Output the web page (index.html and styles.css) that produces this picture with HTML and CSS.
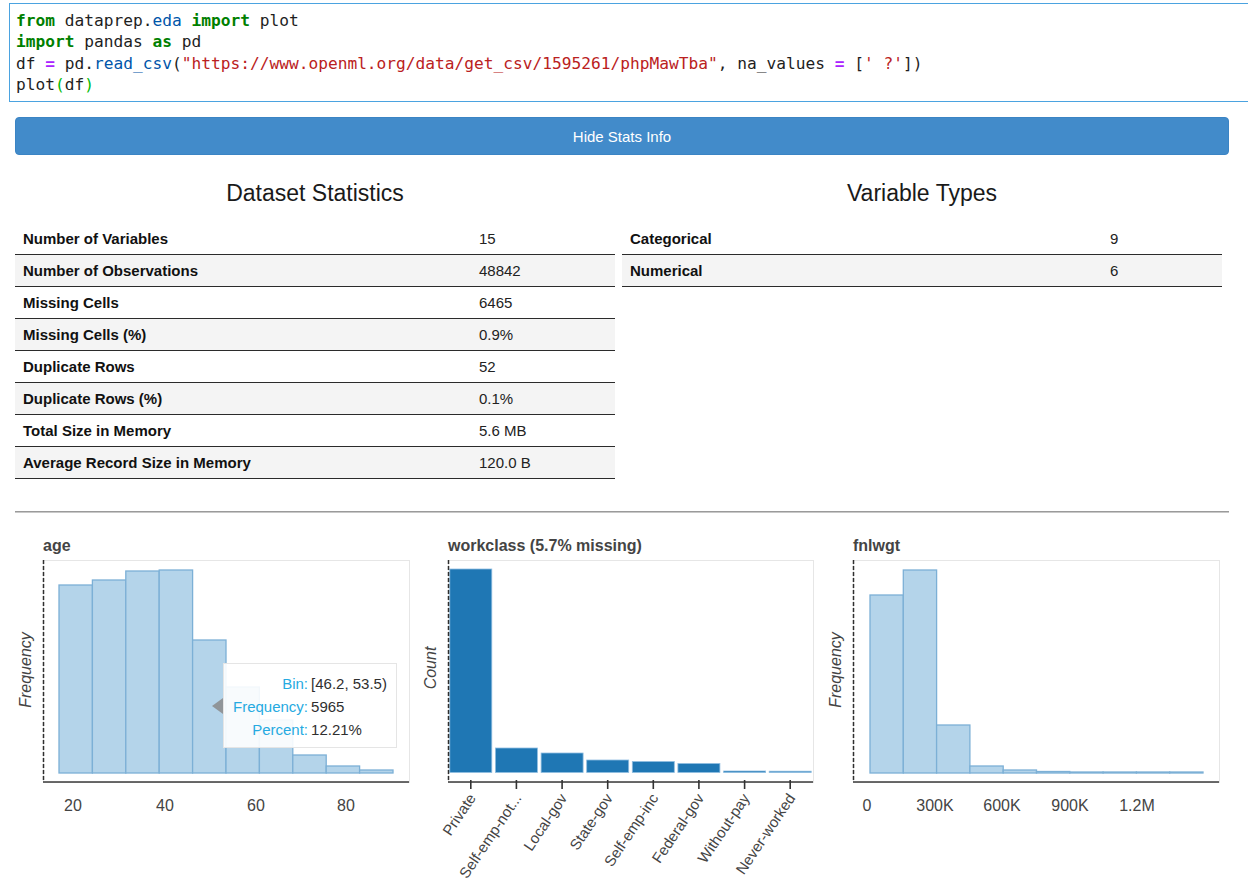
FILE: index.html
```html
<!DOCTYPE html>
<html>
<head>
<meta charset="utf-8">
<link rel="stylesheet" href="styles.css">
</head>
<body>
<div class="cell">
<pre class="code"><span class="kw">from</span> dataprep.<span class="prop">eda</span> <span class="kw">import</span> plot
<span class="kw">import</span> pandas <span class="kw">as</span> pd
df <span class="op">=</span> pd.<span class="prop">read_csv</span>(<span class="str">"https://www.openml.org/data/get_csv/1595261/phpMawTba"</span>, na_values <span class="op">=</span> [<span class="str">' ?'</span>])
plot<span class="mb">(</span>df<span class="mb">)</span></pre>
</div>

<div class="output">
  <button class="toggle">Hide Stats Info</button>

  <div class="stats">
    <section class="stat-col">
      <h3 class="stat-title">Dataset Statistics</h3>
      <table class="stat-table left">
        <tr><td class="k">Number of Variables</td><td class="v">15</td></tr>
        <tr><td class="k">Number of Observations</td><td class="v">48842</td></tr>
        <tr><td class="k">Missing Cells</td><td class="v">6465</td></tr>
        <tr><td class="k">Missing Cells (%)</td><td class="v">0.9%</td></tr>
        <tr><td class="k">Duplicate Rows</td><td class="v">52</td></tr>
        <tr><td class="k">Duplicate Rows (%)</td><td class="v">0.1%</td></tr>
        <tr><td class="k">Total Size in Memory</td><td class="v">5.6 MB</td></tr>
        <tr><td class="k">Average Record Size in Memory</td><td class="v">120.0 B</td></tr>
      </table>
    </section>
    <section class="stat-col">
      <h3 class="stat-title">Variable Types</h3>
      <table class="stat-table right">
        <tr><td class="k">Categorical</td><td class="v">9</td></tr>
        <tr><td class="k">Numerical</td><td class="v">6</td></tr>
      </table>
    </section>
  </div>

  <hr class="divider">

  <div class="charts">
    <div class="chart">
      <svg class="plot" width="405" height="366" viewBox="0 0 405 366">
        <text class="title" x="28" y="26">age</text>
        <rect class="frame" x="28.5" y="35.5" width="366" height="222"/>
        <g class="hist">
          <rect x="44" y="60" width="33.4" height="188"/>
          <rect x="77.4" y="55" width="33.4" height="193"/>
          <rect x="110.8" y="46" width="33.4" height="202"/>
          <rect x="144.2" y="45" width="33.4" height="203"/>
          <rect x="177.6" y="115" width="33.4" height="133"/>
          <rect x="211" y="162" width="33.4" height="86"/>
          <rect x="244.4" y="195" width="33.4" height="53"/>
          <rect x="277.8" y="230" width="33.4" height="18"/>
          <rect x="311.2" y="241" width="33.4" height="7"/>
          <rect x="344.6" y="245" width="33.4" height="3"/>
        </g>
        <line class="yaxis" x1="28.5" y1="35" x2="28.5" y2="257"/>
        <line class="xaxis" x1="28" y1="257" x2="394" y2="257"/>
        <g class="ticklbl">
          <text x="58" y="286">20</text>
          <text x="150" y="286">40</text>
          <text x="241" y="286">60</text>
          <text x="331" y="286">80</text>
        </g>
        <text class="ylabel" x="10" y="145" transform="rotate(-90 10 145)">Frequency</text>
      </svg>
      <div class="tooltip">
        <span class="tl">Bin:</span><span class="tv">[46.2, 53.5)</span>
        <span class="tl">Frequency:</span><span class="tv">5965</span>
        <span class="tl">Percent:</span><span class="tv">12.21%</span>
      </div>
    </div>

    <div class="chart">
      <svg class="plot" width="405" height="366" viewBox="0 0 405 366">
        <text class="title" x="28" y="26">workclass (5.7% missing)</text>
        <rect class="frame" x="28.5" y="35.5" width="365" height="222"/>
        <g class="bars">
          <rect x="29.8" y="44" width="42" height="203.5"/>
          <rect x="75.4" y="223" width="42" height="24.5"/>
          <rect x="121.1" y="228" width="42" height="19.5"/>
          <rect x="166.7" y="235" width="42" height="12.5"/>
          <rect x="212.3" y="236.5" width="42" height="11"/>
          <rect x="257.9" y="238.5" width="42" height="9"/>
          <rect x="303.6" y="246" width="42" height="1.5"/>
          <rect x="349.2" y="246.2" width="42" height="1.3"/>
        </g>
        <line class="yaxis" x1="28.5" y1="35" x2="28.5" y2="257"/>
        <line class="xaxis" x1="28" y1="257" x2="393" y2="257"/>
        <g class="ticks">
          <line x1="50.8" y1="255" x2="50.8" y2="264"/>
          <line x1="96.4" y1="255" x2="96.4" y2="264"/>
          <line x1="142.1" y1="255" x2="142.1" y2="264"/>
          <line x1="187.7" y1="255" x2="187.7" y2="264"/>
          <line x1="233.3" y1="255" x2="233.3" y2="264"/>
          <line x1="278.9" y1="255" x2="278.9" y2="264"/>
          <line x1="324.6" y1="255" x2="324.6" y2="264"/>
          <line x1="370.2" y1="255" x2="370.2" y2="264"/>
        </g>
        <g class="catlbl">
          <text transform="translate(56.5 273) rotate(-56)">Private</text>
          <text transform="translate(102.1 273) rotate(-56)">Self-emp-not...</text>
          <text transform="translate(147.8 273) rotate(-56)">Local-gov</text>
          <text transform="translate(193.4 273) rotate(-56)">State-gov</text>
          <text transform="translate(239 273) rotate(-56)">Self-emp-inc</text>
          <text transform="translate(284.6 273) rotate(-56)">Federal-gov</text>
          <text transform="translate(330.3 273) rotate(-56)">Without-pay</text>
          <text transform="translate(375.9 273) rotate(-56)">Never-worked</text>
        </g>
        <text class="ylabel" x="10" y="143" transform="rotate(-90 10 143)">Count</text>
      </svg>
    </div>

    <div class="chart">
      <svg class="plot" width="405" height="366" viewBox="0 0 405 366">
        <text class="title" x="28" y="26">fnlwgt</text>
        <rect class="frame" x="28.5" y="35.5" width="366" height="222"/>
        <g class="hist">
          <rect x="45" y="70" width="33.3" height="178"/>
          <rect x="78.3" y="45" width="33.3" height="203"/>
          <rect x="111.6" y="200" width="33.3" height="48"/>
          <rect x="144.9" y="241" width="33.3" height="7"/>
          <rect x="178.2" y="245" width="33.3" height="3"/>
          <rect x="211.5" y="246.5" width="33.3" height="1.5"/>
          <rect x="244.8" y="247" width="33.3" height="1"/>
          <rect x="278.1" y="247" width="33.3" height="1"/>
          <rect x="311.4" y="247" width="33.3" height="1"/>
          <rect x="344.7" y="247" width="33.3" height="1"/>
        </g>
        <line class="yaxis" x1="28.5" y1="35" x2="28.5" y2="257"/>
        <line class="xaxis" x1="28" y1="257" x2="394" y2="257"/>
        <g class="ticklbl">
          <text x="42" y="286">0</text>
          <text x="110" y="286">300K</text>
          <text x="177" y="286">600K</text>
          <text x="245" y="286">900K</text>
          <text x="312" y="286">1.2M</text>
        </g>
        <text class="ylabel" x="10" y="145" transform="rotate(-90 10 145)">Frequency</text>
      </svg>
    </div>
  </div>
</div>
</body>
</html>
```

FILE: styles.css
```css
html, body {
  margin: 0;
  padding: 0;
  overflow: hidden;
  background: #fff;
}

body {
  font-family: "Liberation Sans", Arial, sans-serif;
  color: #222;
}

/* ---------- code cell ---------- */
.cell {
  margin: 3px -30px 0 9px;
  border: 1px solid #4ba3e0;
  background: #fff;
}

.code {
  margin: 0;
  padding: 6px 0 6px 6px;
  font-family: "DejaVu Sans Mono", "Liberation Mono", monospace;
  font-size: 16.2px;
  line-height: 21.3px;
  color: #1e1e1e;
  white-space: pre;
}

.kw { color: #008000; font-weight: bold; }
.prop { color: #0055aa; }
.str { color: #ba2121; }
.op { color: #aa22ff; font-weight: bold; }
.mb { color: #00bb00; }

/* ---------- output ---------- */
.output {
  padding: 0 19px 0 15px;
}

.toggle {
  display: block;
  width: 100%;
  height: 38px;
  margin: 15px 0 0 0;
  padding: 1px 0 0 0;
  border: 1px solid #3b84c4;
  border-radius: 4px;
  background: #428bca;
  color: #fff;
  font-family: "Liberation Sans", Arial, sans-serif;
  font-size: 15px;
}

.stats {
  display: grid;
  grid-template-columns: 600px 600px;
  column-gap: 7px;
  align-items: start;
}

.stat-title {
  margin: 24px 0 16px 0;
  font-size: 23px;
  line-height: 28px;
  font-weight: normal;
  text-align: center;
  color: #1a1a1a;
}

.stat-table {
  width: 600px;
  border-collapse: separate;
  border-spacing: 0;
  font-size: 15px;
}

.stat-table td {
  height: 32px;
  padding: 0 8px;
  line-height: 31px;
  border-bottom: 1px solid #2b2b2b;
  box-sizing: border-box;
}

.stat-table tr:nth-child(even) td {
  background: #f4f4f4;
}

.stat-table .k {
  font-weight: bold;
  color: #111;
}

.stat-table .v {
  color: #222;
}

.stat-table.left .k { width: 456px; }
.stat-table.right .k { width: 480px; }

.divider {
  margin: 32px 0 0 0;
  height: 0;
  border: 0;
  border-top: 1px solid #9a9a9a;
  border-bottom: 1px solid #c8c8c8;
}

/* ---------- charts ---------- */
.charts {
  display: flex;
  margin-top: 12px;
}

.chart {
  position: relative;
  width: 405px;
  height: 366px;
  flex: none;
}

.plot {
  display: block;
  font-family: "Liberation Sans", Arial, sans-serif;
}

.plot .title {
  font-size: 16px;
  font-weight: bold;
  fill: #444;
}

.plot .frame {
  fill: none;
  stroke: #e6e6e6;
  stroke-width: 1;
}

.plot .hist rect {
  fill: #b4d4ea;
  stroke: #7cb0d6;
  stroke-width: 1.3;
}

.plot .bars rect {
  fill: #1f77b4;
  stroke: #8fbde0;
  stroke-width: 0.8;
}

.plot .yaxis {
  stroke: #2f2f2f;
  stroke-width: 1.5;
  stroke-dasharray: 4 2;
}

.plot .xaxis {
  stroke: #3a3a3a;
  stroke-width: 1.6;
}

.plot .ticks line {
  stroke: #333;
  stroke-width: 1.6;
}

.plot .ticklbl text {
  font-size: 16px;
  fill: #444;
  text-anchor: middle;
}

.plot .catlbl text {
  font-size: 15px;
  fill: #444;
  text-anchor: end;
}

.plot .ylabel {
  font-size: 16px;
  font-style: italic;
  fill: #444;
  text-anchor: middle;
  dominant-baseline: central;
}

/* ---------- tooltip ---------- */
.tooltip {
  position: absolute;
  left: 208px;
  top: 138px;
  box-sizing: border-box;
  width: 174px;
  height: 85px;
  padding: 8px 9px;
  display: grid;
  grid-template-columns: auto 1fr;
  column-gap: 3px;
  font-size: 15px;
  line-height: 23px;
  background: rgba(255, 255, 255, 0.9);
  border: 1px solid #e5e5e5;
}

.tooltip::before {
  content: "";
  position: absolute;
  left: -12px;
  top: 34px;
  border-top: 8px solid transparent;
  border-bottom: 8px solid transparent;
  border-right: 11px solid #909599;
}

.tl {
  color: #26aae1;
  text-align: right;
}

.tv {
  color: #2f2f2f;
}
```
